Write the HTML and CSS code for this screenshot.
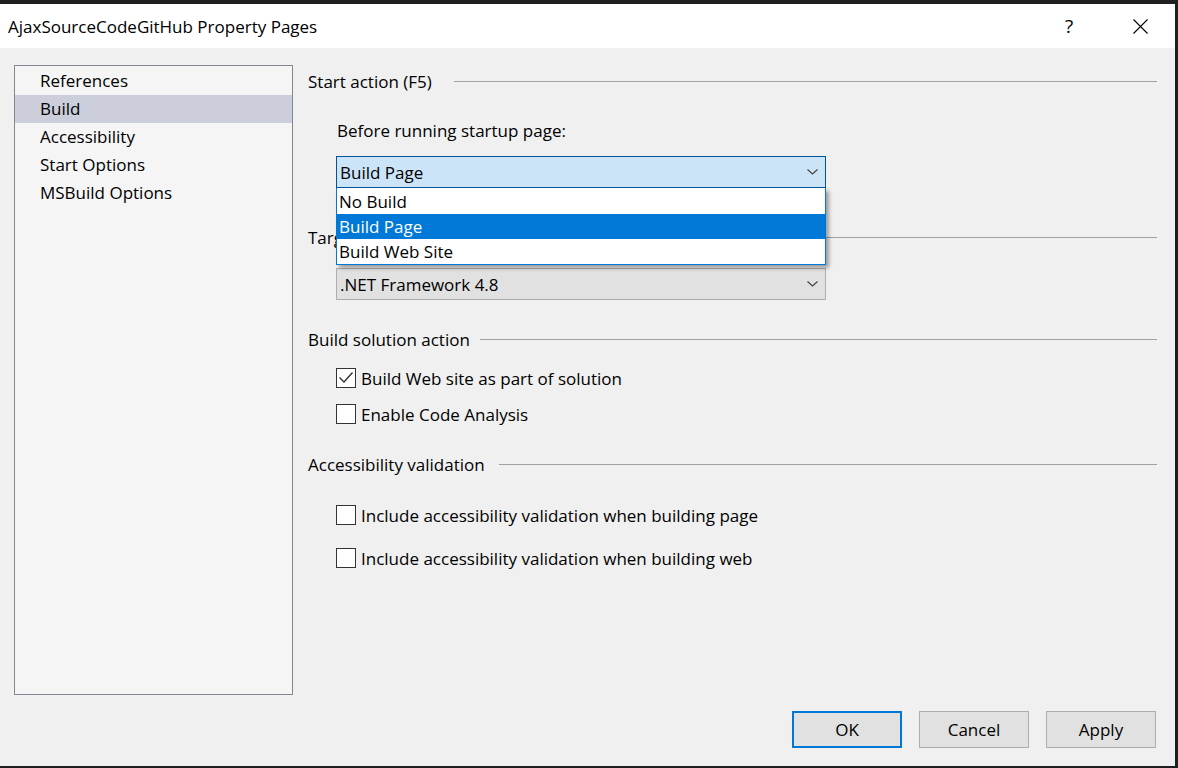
FILE: index.html
```html
<!DOCTYPE html>
<html lang="en">
<head>
<meta charset="utf-8">
<title>AjaxSourceCodeGitHub Property Pages</title>
<link rel="stylesheet" href="styles.css">
</head>
<body>
<div class="window">
  <div class="titlebar">
    <span class="title">AjaxSourceCodeGitHub Property Pages</span>
    <span class="help">?</span>
    <svg class="close" width="15" height="15" viewBox="0 0 15 15"><path d="M0.5 0.5 L14.5 14.5 M14.5 0.5 L0.5 14.5" stroke="#000" stroke-width="1.1" fill="none"/></svg>
  </div>
  <div class="client">
    <div class="main">
      <ul class="nav">
        <li class="nav-item">References</li>
        <li class="nav-item selected">Build</li>
        <li class="nav-item">Accessibility</li>
        <li class="nav-item">Start Options</li>
        <li class="nav-item">MSBuild Options</li>
      </ul>
      <div class="content">
        <div class="group-header g1"><span>Start action (F5)</span><i class="rule"></i></div>
        <div class="label before">Before running startup page:</div>
        <div class="combo-wrap">
          <div class="combo open"><span>Build Page</span>
            <svg class="chev" width="11" height="6" viewBox="0 0 11 6"><polyline points="0.5,0.5 5.5,5 10.5,0.5" fill="none" stroke="#444" stroke-width="1.2"/></svg>
          </div>
          <ul class="dropdown">
            <li class="opt">No Build</li>
            <li class="opt sel">Build Page</li>
            <li class="opt">Build Web Site</li>
          </ul>
        </div>
        <div class="group-header g2"><span>Target Framework</span><i class="rule"></i></div>
        <div class="combo plain"><span>.NET Framework 4.8</span>
          <svg class="chev" width="11" height="6" viewBox="0 0 11 6"><polyline points="0.5,0.5 5.5,5 10.5,0.5" fill="none" stroke="#444" stroke-width="1.2"/></svg>
        </div>
        <div class="group-header g3"><span>Build solution action</span><i class="rule"></i></div>
        <div class="check c1"><span class="box"><svg width="18" height="18" viewBox="0 0 18 18"><polyline points="2.5,8.5 7,13 15.5,3.5" fill="none" stroke="#333" stroke-width="1.4"/></svg></span><span>Build Web site as part of solution</span></div>
        <div class="check c2"><span class="box"></span><span>Enable Code Analysis</span></div>
        <div class="group-header g4"><span>Accessibility validation</span><i class="rule"></i></div>
        <div class="check c3"><span class="box"></span><span>Include accessibility validation when building page</span></div>
        <div class="check c4"><span class="box"></span><span>Include accessibility validation when building web</span></div>
      </div>
    </div>
    <div class="buttons">
      <button class="btn default">OK</button>
      <button class="btn">Cancel</button>
      <button class="btn">Apply</button>
    </div>
  </div>
</div>
</body>
</html>
```
FILE: styles.css
```css
* { box-sizing: border-box; }
html, body { margin: 0; padding: 0; }
body {
  background: #1f1f1f;
  width: 1178px;
  height: 768px;
  overflow: hidden;
  font-family: "Open Sans", "Noto Sans", sans-serif;
  font-size: 17px;
  color: #000;
}
.window {
  margin-top: 4px;
  width: 1175px;
  height: 762px;
  display: flex;
  flex-direction: column;
}
.titlebar {
  height: 44px;
  background: #fff;
  display: flex;
  align-items: center;
  padding-left: 8px;
}
.title { font-size: 17px; flex: 1; }
.help {
  font-size: 19px;
  width: 14px;
  margin-right: 54px;
  line-height: 1;
}
.close { margin-right: 27px; }
.client {
  flex: 1;
  background: #f0f0f0;
  display: flex;
  flex-direction: column;
}
.main {
  display: flex;
  margin-top: 17px;
  height: 630px;
}
.nav {
  list-style: none;
  margin: 0 0 0 14px;
  padding: 1px 0 0 0;
  width: 279px;
  height: 630px;
  border: 1px solid #828790;
  background: #f5f5f5;
}
.nav-item {
  height: 28px;
  line-height: 28px;
  padding-left: 25px;
}
.nav-item.selected { background: #cccedb; }
.content {
  margin-left: 15px;
  width: 849px;
  display: flex;
  flex-direction: column;
}
.group-header {
  height: 32px;
  display: flex;
  align-items: center;
}
.group-header .rule {
  flex: 1;
  height: 1px;
  background: #a0a0a0;
  margin-left: 14px;
}
.g1 .rule { margin-left: 22px; }
.g3 .rule { margin-left: 10px; }
.g2 { margin-top: 33px; }
.g3 { margin-top: 23px; }
.g4 { margin-top: 24px; }
.label { height: 24px; line-height: 24px; }
.before { margin-top: 22px; margin-left: 29px; }
.combo-wrap {
  position: relative;
  margin-top: 13px;
  margin-left: 28px;
  width: 490px;
  z-index: 2;
}
.combo {
  width: 490px;
  height: 32px;
  display: flex;
  align-items: center;
  padding-left: 3px;
  padding-right: 7px;
  border: 1px solid #adadad;
  background: #e1e1e1;
}
.combo span { flex: 1; }
.combo.open { border-color: #005499; background: #cce4f7; }
.combo.plain { margin-left: 28px; margin-top: 15px; }
.chev { display: block; }
.dropdown {
  position: absolute;
  left: 0;
  top: 32px;
  width: 490px;
  margin: 0;
  padding: 0;
  list-style: none;
  background: #fff;
  border: 1px solid #0078d7;
  border-top: none;
  box-shadow: 3px 3px 4px rgba(0,0,0,0.35);
}
.opt {
  height: 25px;
  line-height: 25px;
  padding-left: 2px;
}
.opt:first-child { height: 26px; line-height: 27px; }
.opt.sel { background: #0078d7; color: #fff; }
.check {
  display: flex;
  align-items: center;
  height: 20px;
  margin-left: 28px;
}
.box {
  width: 20px;
  height: 20px;
  border: 1px solid #333;
  background: #fff;
  margin-right: 5px;
  display: flex;
  align-items: center;
  justify-content: center;
}
.box svg { display: block; }
.c1 { margin-top: 13px; }
.c2 { margin-top: 16px; }
.c3 { margin-top: 25px; }
.c4 { margin-top: 23px; }
.buttons {
  display: flex;
  justify-content: flex-end;
  gap: 17px;
  margin-top: 16px;
  padding-right: 19px;
}
.btn {
  width: 110px;
  height: 37px;
  font-family: inherit;
  font-size: 17px;
  color: #000;
  background: #e1e1e1;
  border: 1px solid #adadad;
  padding: 0;
}
.btn.default { border: 2px solid #0078d7; }
```
